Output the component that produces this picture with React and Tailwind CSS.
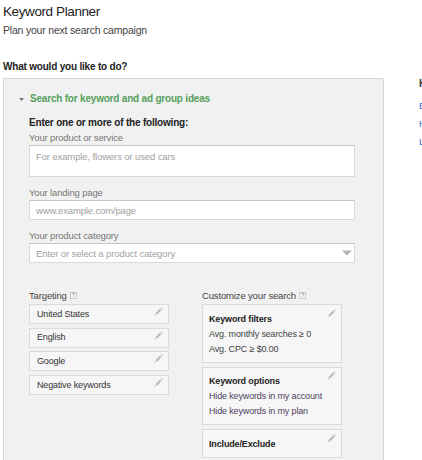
import React from "react";

const Pencil = () => (
  <svg width="10" height="10" viewBox="0 0 10 10" className="shrink-0">
    <path d="M2.6 5.9 L7 1.5 L8.5 3 L4.1 7.4 Z" fill="#b9b9b9" />
    <path d="M2.6 5.9 L4.1 7.4 L1.2 8.8 Z" fill="#d0d0d0" />
    <path d="M7.6 0.9 L8.3 0.2 L9.8 1.7 L9.1 2.4 Z" fill="#b9b9b9" />
  </svg>
);

const Help = () => (
  <span className="inline-flex w-[7px] h-[7px] border border-[#c9c9c9] bg-[#fafafa] items-center justify-center text-[5.5px] leading-none text-[#999] ml-[3px] font-bold">
    ?
  </span>
);

const TargetRow = ({ label }) => (
  <div className="h-[20px] flex items-start justify-between border border-[#dadada] bg-[#f6f6f6] pl-[7px] pr-[5px]">
    <span className="self-center text-[9px] leading-[11px] tracking-[-0.15px] text-[#333]">{label}</span>
    <span className="mt-[2px]">
      <Pencil />
    </span>
  </div>
);

const Card = ({ title, lines, lineColor }) => (
  <div className="flex justify-between border border-[#dadada] bg-[#f6f6f6] pl-[6px] pr-[5px] pt-[3.5px] pb-[5px]">
    <div className="pt-[3px]">
      <div className="text-[9px] leading-[15px] font-bold tracking-[-0.15px] text-[#222]">{title}</div>
      {lines.map((l) => (
        <div key={l} className={`text-[9px] leading-[15px] tracking-[-0.15px] ${lineColor}`}>
          {l}
        </div>
      ))}
    </div>
    <Pencil />
  </div>
);

export default function App() {
  return (
    <div className="w-[422px] h-[460px] overflow-hidden bg-white font-['Liberation_Sans',Arial,sans-serif] text-[#333] pl-[3px]">
      <div className="pt-[4px] text-[13.5px] leading-[16px] tracking-[-0.4px] text-[#222]">Keyword Planner</div>
      <div className="mt-[4px] text-[10.5px] leading-[12px] tracking-[-0.2px] text-[#444]">
        Plan your next search campaign
      </div>
      <div className="mt-[25px] text-[10px] leading-[12px] font-bold tracking-[-0.2px] text-[#222]">
        What would you like to do?
      </div>
      <div className="mt-[5px] flex items-start">
        <div className="w-[381px] h-[400px] shrink-0 border border-b-0 border-[#d6d6d6] bg-[#f1f1f1] pt-[14px] pl-[15px]">
          <div className="flex items-center gap-[6px]">
            <svg width="5" height="3" viewBox="0 0 5 3">
              <path d="M0 0 L5 0 L2.5 3 Z" fill="#777" />
            </svg>
            <span className="text-[10px] leading-[12px] font-bold tracking-[-0.2px] text-[#55a05c]">
              Search for keyword and ad group ideas
            </span>
          </div>
          <div className="ml-[10px]">
            <div className="mt-[12px] text-[10px] leading-[12px] font-bold tracking-[-0.2px] text-[#222]">
              Enter one or more of the following:
            </div>
            <div className="mt-[3px] text-[9.5px] leading-[11px] tracking-[-0.15px] text-[#777]">
              Your product or service
            </div>
            <div className="mt-[2px] w-[326px] h-[32px] border border-[#d8d8d8] border-t-[#c6c6c6] bg-white pl-[6px] pt-[4.5px] text-[9.5px] leading-[11px] tracking-[-0.12px] text-[#a0a0a0]">
              For example, flowers or used cars
            </div>
            <div className="mt-[10px] text-[9.5px] leading-[11px] tracking-[-0.15px] text-[#777]">
              Your landing page
            </div>
            <div className="mt-[2px] w-[326px] h-[20px] flex items-center border border-[#d8d8d8] border-t-[#c6c6c6] bg-white pl-[6px] text-[9.5px] leading-[11px] tracking-[-0.15px] text-[#a0a0a0]">
              www.example.com/page
            </div>
            <div className="mt-[10px] text-[9.5px] leading-[11px] tracking-[-0.15px] text-[#777]">
              Your product category
            </div>
            <div className="mt-[2px] w-[326px] h-[20px] flex items-center justify-between border border-[#d8d8d8] border-t-[#c6c6c6] bg-white pl-[6px] pr-[2px] text-[9.5px] leading-[11px] tracking-[-0.1px] text-[#a0a0a0]">
              <span>Enter or select a product category</span>
              <svg width="10" height="6" viewBox="0 0 10 6">
                <path d="M0 0.5 L10 0.5 L5 5.5 Z" fill="#b3b3b3" />
              </svg>
            </div>
            <div className="mt-[27px] flex gap-[33px]">
              <div className="w-[140px]">
                <div className="flex items-center text-[9.5px] leading-[11px] tracking-[-0.15px] text-[#444]">
                  Targeting
                  <Help />
                </div>
                <div className="mt-[3px] flex flex-col gap-[3.7px]">
                  <TargetRow label="United States" />
                  <TargetRow label="English" />
                  <TargetRow label="Google" />
                  <TargetRow label="Negative keywords" />
                </div>
              </div>
              <div className="w-[140px]">
                <div className="flex items-center text-[9.5px] leading-[11px] tracking-[-0.15px] text-[#444]">
                  Customize your search
                  <Help />
                </div>
                <div className="mt-[3px] flex flex-col gap-[4px]">
                  <Card
                    title="Keyword filters"
                    lines={["Avg. monthly searches \u2265 0", "Avg. CPC \u2265 $0.00"]}
                    lineColor="text-[#444]"
                  />
                  <Card
                    title="Keyword options"
                    lines={["Hide keywords in my account", "Hide keywords in my plan"]}
                    lineColor="text-[#4d3f5e]"
                  />
                  <Card title="Include/Exclude" lines={[]} lineColor="text-[#444]" />
                </div>
              </div>
            </div>
          </div>
        </div>
        <div className="ml-[35px] shrink-0 whitespace-nowrap flex flex-col">
          <div className="text-[10px] leading-[12px] font-bold text-[#333]">Keyword Planner help</div>
          <div className="mt-[10px] text-[9.5px] leading-[11px] text-[#3b6fd0]">Explore new keywords</div>
          <div className="mt-[7px] text-[9.5px] leading-[11px] text-[#3b6fd0]">How to use it</div>
          <div className="mt-[7px] text-[9.5px] leading-[11px] text-[#3b6fd0]">Learn more</div>
        </div>
      </div>
    </div>
  );
}
